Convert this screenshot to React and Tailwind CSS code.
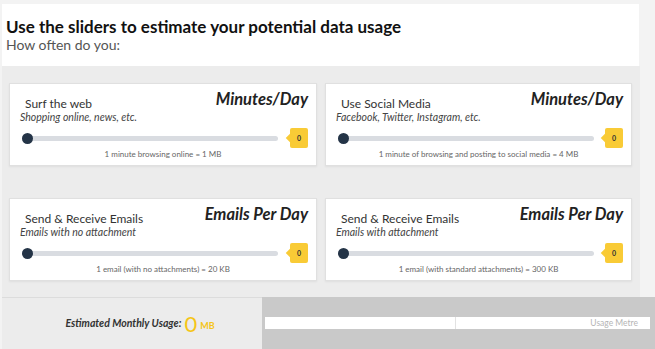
import React from "react";

const cards = [
  {
    title: "Surf the web",
    unit: "Minutes/Day",
    sub: "Shopping online, news, etc.",
    note: "1 minute browsing online = 1 MB",
  },
  {
    title: "Use Social Media",
    unit: "Minutes/Day",
    sub: "Facebook, Twitter, Instagram, etc.",
    note: "1 minute of browsing and posting to social media = 4 MB",
  },
  {
    title: "Send & Receive Emails",
    unit: "Emails Per Day",
    sub: "Emails with no attachment",
    note: "1 email (with no attachments) = 20 KB",
  },
  {
    title: "Send & Receive Emails",
    unit: "Emails Per Day",
    sub: "Emails with attachment",
    note: "1 email (with standard attachments) = 300 KB",
  },
];

function SliderCard({ title, unit, sub, note }) {
  return (
    <div className="h-[83px] bg-white border border-[#e0e0e0] shadow-[0_1px_2px_rgba(0,0,0,0.06)] flex flex-col">
      <div className="flex justify-between items-start pt-[6px] pr-[8px]">
        <div className="pl-[15px] pt-[7px] text-[12px] leading-[14px] text-[#333]">{title}</div>
        <div className="text-[16.5px] leading-[19px] font-bold italic text-[#222]">{unit}</div>
      </div>
      <div className="pl-[10px] text-[10.5px] leading-[12px] italic text-[#444]">{sub}</div>
      <div className="flex items-center pl-[12px] pr-[8px] mt-[5px] h-[20px]">
        <div className="relative w-[256px] h-[5px] rounded-full bg-[#d9dce1]">
          <div className="absolute left-0 top-[-3px] w-[11px] h-[11px] rounded-full bg-[#243447]" />
        </div>
        <div className="relative ml-auto w-[18px] h-[20px] rounded-[2px] bg-[#f9cb36] flex items-center justify-center text-[7px] font-bold text-[#333]">
          <div className="absolute left-[-3px] top-[7px] w-[6px] h-[6px] rotate-45 bg-[#f9cb36]" />
          <span className="relative">0</span>
        </div>
      </div>
      <div className="text-center text-[8px] leading-[10px] text-[#666] mt-[1px]">{note}</div>
    </div>
  );
}

export default function App() {
  return (
    <div className="w-[655px] h-[349px] overflow-hidden bg-[#f3f3f3] font-['Lato',sans-serif]">
      <div className="h-[4px]" />
      <div className="ml-[2px] w-[637px] h-[62px] bg-white pl-[4px] pt-[13px]">
        <h1 className="text-[17px] leading-[20px] font-bold text-[#111]">
          Use the sliders to estimate your potential data usage
        </h1>
        <p className="text-[14px] leading-[16px] text-[#555]">How often do you:</p>
      </div>
      <div className="ml-[2px] w-[638px] h-[231px] bg-[#ececec] pt-[17px] pl-[7px] grid grid-cols-[308px_307px] gap-x-[8px] gap-y-[32px] content-start">
        {cards.map((c, i) => (
          <SliderCard key={i} {...c} />
        ))}
      </div>
      <div className="flex h-[52px]">
        <div className="ml-[2px] w-[260px] bg-[#ececec] border-t border-[#dcdcdc] flex items-center justify-center gap-[3px] pl-[16px]">
          <span className="text-[10.5px] font-bold italic text-[#333]">Estimated Monthly Usage:</span>
          <span className="text-[22px] leading-[22px] text-[#f5c518]">0</span>
          <span className="text-[9px] font-bold text-[#f5c518] mt-[4px]">MB</span>
        </div>
        <div className="flex-1 bg-[#c9c9c9] pt-[20px] pl-[3px] pr-[5px]">
          <div className="h-[12px] bg-white flex">
            <div className="w-[191px] border-r border-[#e2e2e2]" />
            <div className="flex-1 flex items-center justify-end pr-[12px] text-[8.5px] text-[#b5b5b5]">
              Usage Metre
            </div>
          </div>
        </div>
      </div>
    </div>
  );
}
